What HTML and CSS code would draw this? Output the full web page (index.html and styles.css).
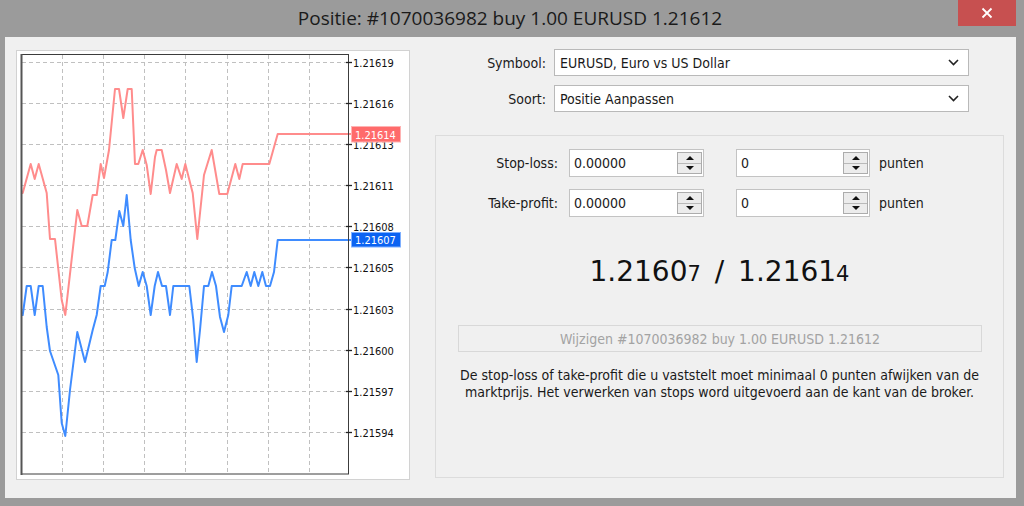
FILE: index.html
```html
<!DOCTYPE html>
<html lang="nl">
<head>
<meta charset="utf-8">
<title>Positie</title>
<link rel="stylesheet" href="styles.css">
</head>
<body>
<div class="window">
  <header class="titlebar">
    <div class="title">Positie: #1070036982 buy 1.00 EURUSD 1.21612</div>
    <button class="close" type="button">
      <svg width="12" height="12" viewBox="0 0 12 12"><path d="M1.5 1.5 L10.5 10.5 M10.5 1.5 L1.5 10.5" stroke="#fff" stroke-width="1.8"/></svg>
    </button>
  </header>
  <main class="panel">
    <div class="chart-frame">
      <svg class="chart" width="392" height="428" viewBox="17 51 392 428">
        <g class="grid" stroke="#c0c0c0" stroke-width="1" stroke-dasharray="4 3">
          <line x1="62.5" y1="55" x2="62.5" y2="474"/>
          <line x1="103.5" y1="55" x2="103.5" y2="474"/>
          <line x1="144.5" y1="55" x2="144.5" y2="474"/>
          <line x1="185.5" y1="55" x2="185.5" y2="474"/>
          <line x1="227.5" y1="55" x2="227.5" y2="474"/>
          <line x1="268.5" y1="55" x2="268.5" y2="474"/>
          <line x1="309.5" y1="55" x2="309.5" y2="474"/>
          <line x1="22" y1="62.5" x2="349" y2="62.5"/>
          <line x1="22" y1="103.5" x2="349" y2="103.5"/>
          <line x1="22" y1="144.5" x2="349" y2="144.5"/>
          <line x1="22" y1="185.5" x2="349" y2="185.5"/>
          <line x1="22" y1="226.5" x2="349" y2="226.5"/>
          <line x1="22" y1="267.5" x2="349" y2="267.5"/>
          <line x1="22" y1="309.5" x2="349" y2="309.5"/>
          <line x1="22" y1="350.5" x2="349" y2="350.5"/>
          <line x1="22" y1="391.5" x2="349" y2="391.5"/>
          <line x1="22" y1="432.5" x2="349" y2="432.5"/>
        </g>
        <polyline class="ask" fill="none" stroke="#ff8c8c" stroke-width="2" stroke-linejoin="round"
          points="22,193 22.7,193 30.7,164 34.7,179 38.7,164 46.7,193 50,239 55,239 61.7,300 65.3,315 77.3,210 81.7,226 87.3,226 92.7,195 96.7,195 100.7,164 104,178 109,150 115,89 119,89 123.3,118 127.7,89 131.7,89 135,164 138.3,164 142.7,150 146.7,165 150.7,194 155,157 156.7,150 161.7,150 166,170 170,193 176.7,164 181.7,179 185.3,164 192.7,193 197.3,239 204,175 211.7,150 219.3,194 227.3,194 235.3,164 239.3,179 242.7,164 269.3,164 277.7,134 352,134"/>
        <polyline class="bid" fill="none" stroke="#3f8cff" stroke-width="2" stroke-linejoin="round"
          points="22,315 22.7,315 26.7,286 30.7,286 34.7,315 38.7,286 42.7,286 46.7,327 50,351 58.3,375 61.7,423 65.3,436 70,390 77.3,332 85,362 92.7,330 96.7,315 100.7,286 104.7,286 107.7,272 111.7,240 115.3,240 119.3,211 123.3,226 126.7,195 130.7,240 134.7,268 138.7,286 142.7,272 146.7,286 150.7,315 154.7,286 158,272 162,286 166,286 170,315 173.3,286 189.3,286 193.3,320 196.7,362 200,330 204,286 208.3,286 212,272 216,286 220,317 224,332 228.3,315 231.7,286 241.7,286 246.7,272 250.7,286 254.3,272 258.3,286 262.3,272 266,286 270,286 274,272 277.7,240 352,240"/>
        <rect x="21.5" y="54.5" width="327" height="419.5" fill="none" stroke="#3c3c3c" stroke-width="1"/>
        <line x1="21.5" y1="54" x2="21.5" y2="475" stroke="#555" stroke-width="2"/>
        <g class="ticks" stroke="#222" stroke-width="1.3">
          <line x1="346" y1="62.5" x2="352" y2="62.5"/>
          <line x1="346" y1="103.5" x2="352" y2="103.5"/>
          <line x1="346" y1="144.5" x2="352" y2="144.5"/>
          <line x1="346" y1="185.5" x2="352" y2="185.5"/>
          <line x1="346" y1="226.5" x2="352" y2="226.5"/>
          <line x1="346" y1="267.5" x2="352" y2="267.5"/>
          <line x1="346" y1="309.5" x2="352" y2="309.5"/>
          <line x1="346" y1="350.5" x2="352" y2="350.5"/>
          <line x1="346" y1="391.5" x2="352" y2="391.5"/>
          <line x1="346" y1="432.5" x2="352" y2="432.5"/>
        </g>
        <g class="axis-labels">
          <text x="353" y="66.5">1.21619</text>
          <text x="353" y="107.5">1.21616</text>
          <text x="353" y="148.5">1.21613</text>
          <text x="353" y="189.5">1.21611</text>
          <text x="353" y="230.5">1.21608</text>
          <text x="353" y="271.5">1.21605</text>
          <text x="353" y="313.5">1.21603</text>
          <text x="353" y="354.5">1.21600</text>
          <text x="353" y="395.5">1.21597</text>
          <text x="353" y="436.5">1.21594</text>
        </g>
        <rect x="351.5" y="126.5" width="49" height="15.5" fill="#ff6b6b" stroke="#ffb3b3" stroke-width="1"/>
        <text class="tag" x="355" y="138.5">1.21614</text>
        <rect x="351.5" y="232.5" width="49" height="14.5" fill="#0b63f2" stroke="#7fb0ff" stroke-width="1"/>
        <text class="tag" x="355" y="244">1.21607</text>
      </svg>
    </div>

    <section class="form">
      <div class="row">
        <label class="label">Symbool:</label>
        <div class="select">
          <span>EURUSD, Euro vs US Dollar</span>
          <svg class="chev" width="11" height="7" viewBox="0 0 11 7"><polyline points="1,1 5.5,5.5 10,1" fill="none" stroke="#222" stroke-width="1.6"/></svg>
        </div>
      </div>
      <div class="row row-2">
        <label class="label">Soort:</label>
        <div class="select">
          <span>Positie Aanpassen</span>
          <svg class="chev" width="11" height="7" viewBox="0 0 11 7"><polyline points="1,1 5.5,5.5 10,1" fill="none" stroke="#222" stroke-width="1.6"/></svg>
        </div>
      </div>

      <div class="group">
        <div class="grow">
          <label class="glabel">Stop-loss:</label>
          <div class="spin-input wide">
            <span>0.00000</span>
            <div class="spinner"><span class="up"></span><span class="down"></span></div>
          </div>
          <div class="spin-input pts">
            <span>0</span>
            <div class="spinner"><span class="up"></span><span class="down"></span></div>
          </div>
          <span class="unit">punten</span>
        </div>
        <div class="grow grow-2">
          <label class="glabel">Take-profit:</label>
          <div class="spin-input wide">
            <span>0.00000</span>
            <div class="spinner"><span class="up"></span><span class="down"></span></div>
          </div>
          <div class="spin-input pts">
            <span>0</span>
            <div class="spinner"><span class="up"></span><span class="down"></span></div>
          </div>
          <span class="unit">punten</span>
        </div>

        <div class="price">1.2160<small>7</small> / 1.2161<small>4</small></div>

        <button class="modify" type="button" disabled>Wijzigen #1070036982 buy 1.00 EURUSD 1.21612</button>

        <p class="note">De stop-loss of take-profit die u vaststelt moet minimaal 0 punten afwijken van de marktprijs. Het verwerken van stops word uitgevoerd aan de kant van de broker.</p>
      </div>
    </section>
  </main>
</div>
</body>
</html>
```

FILE: styles.css
```css
* { box-sizing: border-box; }

html, body {
  margin: 0;
  padding: 0;
  background: #9b9b9b;
  width: 1024px;
  height: 506px;
  overflow: hidden;
}

body {
  font-family: "DejaVu Sans Condensed", "DejaVu Sans", sans-serif;
  font-stretch: condensed;
  font-size: 14px;
  color: #1a1a1a;
}

.window {
  width: 1024px;
  height: 506px;
  display: flex;
  flex-direction: column;
}

.titlebar {
  height: 37px;
  display: grid;
  grid-template-columns: 1fr auto 1fr;
  align-items: start;
}

.title {
  grid-column: 2;
  font-family: "Open Sans", "Noto Sans", sans-serif;
  font-stretch: normal;
  font-size: 19px;
  line-height: 37px;
  color: #1a1a1a;
  white-space: nowrap;
  padding-right: 4px;
}

.close {
  grid-column: 3;
  justify-self: end;
  margin-right: 8px;
  width: 58px;
  height: 26px;
  border: none;
  padding: 0;
  background: #c75050;
  display: flex;
  align-items: center;
  justify-content: center;
}

.panel {
  margin: 0 8px 8px 5px;
  height: 461px;
  background: #f0f0f0;
  display: flex;
  align-items: flex-start;
  padding: 12px 0 0 11px;
}

.chart-frame {
  margin-top: 1px;
  width: 394px;
  height: 430px;
  background: #fff;
  border: 1px solid #d2d2d2;
}

.chart { display: block; }

.axis-labels text {
  font-family: "DejaVu Sans Condensed", "DejaVu Sans", sans-serif;
  font-stretch: condensed;
  font-size: 11px;
  fill: #111;
}

.tag {
  font-family: "DejaVu Sans Condensed", "DejaVu Sans", sans-serif;
  font-stretch: condensed;
  font-size: 11px;
  fill: #fff;
}

.form {
  margin-left: 25px;
  width: 569px;
}

.row {
  display: flex;
  align-items: center;
  height: 27px;
}

.row-2 { margin-top: 9px; }

.label {
  width: 111px;
  text-align: right;
  margin-right: 8px;
}

.select {
  width: 415px;
  height: 27px;
  background: #fff;
  border: 1px solid #b9b9b9;
  display: flex;
  align-items: center;
  justify-content: space-between;
  padding: 0 9px 0 5px;
}

.chev { display: block; }

.group {
  margin-top: 23px;
  height: 343px;
  border: 1px solid #dcdcdc;
  padding-top: 13px;
  display: flex;
  flex-direction: column;
}

.grow {
  display: flex;
  align-items: center;
  height: 28px;
}

.grow-2 { margin-top: 12px; }

.glabel {
  width: 122px;
  text-align: right;
  margin-right: 11px;
}

.spin-input {
  height: 28px;
  background: #fff;
  border: 1px solid #c3c3c3;
  display: flex;
  align-items: center;
  justify-content: space-between;
  padding: 0 1px 0 4px;
}

.spin-input.wide { width: 135px; }
.spin-input.pts { width: 134px; margin-left: 32px; }

.spinner {
  width: 25px;
  height: 22px;
  border: 1px solid #acacac;
  background: #ececec;
  display: flex;
  flex-direction: column;
}

.spinner .up,
.spinner .down {
  flex: 1;
  display: flex;
  align-items: center;
  justify-content: center;
}

.spinner .up { border-bottom: 1px solid #b9b9b9; }

.spinner .up::before {
  content: "";
  border-left: 4px solid transparent;
  border-right: 4px solid transparent;
  border-bottom: 4px solid #111;
}

.spinner .down::before {
  content: "";
  border-left: 4px solid transparent;
  border-right: 4px solid transparent;
  border-top: 4px solid #111;
}

.unit { margin-left: 9px; }

.price {
  margin-top: 35px;
  height: 40px;
  line-height: 40px;
  text-align: center;
  font-family: "DejaVu Sans", sans-serif;
  font-stretch: normal;
  font-size: 28px;
  word-spacing: 5px;
  color: #111;
}

.price small {
  font-size: 21px;
  word-spacing: 0;
}

.modify {
  margin: 33px 21px 0 22px;
  height: 27px;
  background: #f0f0f0;
  border: 1px solid #d8d8d8;
  font-family: inherit;
  font-stretch: condensed;
  font-size: 14px;
  color: #a3a3a3;
  padding: 0;
}

.note {
  margin: 15px 20px 0;
  text-align: center;
  line-height: 17px;
  color: #1a1a1a;
}
```
